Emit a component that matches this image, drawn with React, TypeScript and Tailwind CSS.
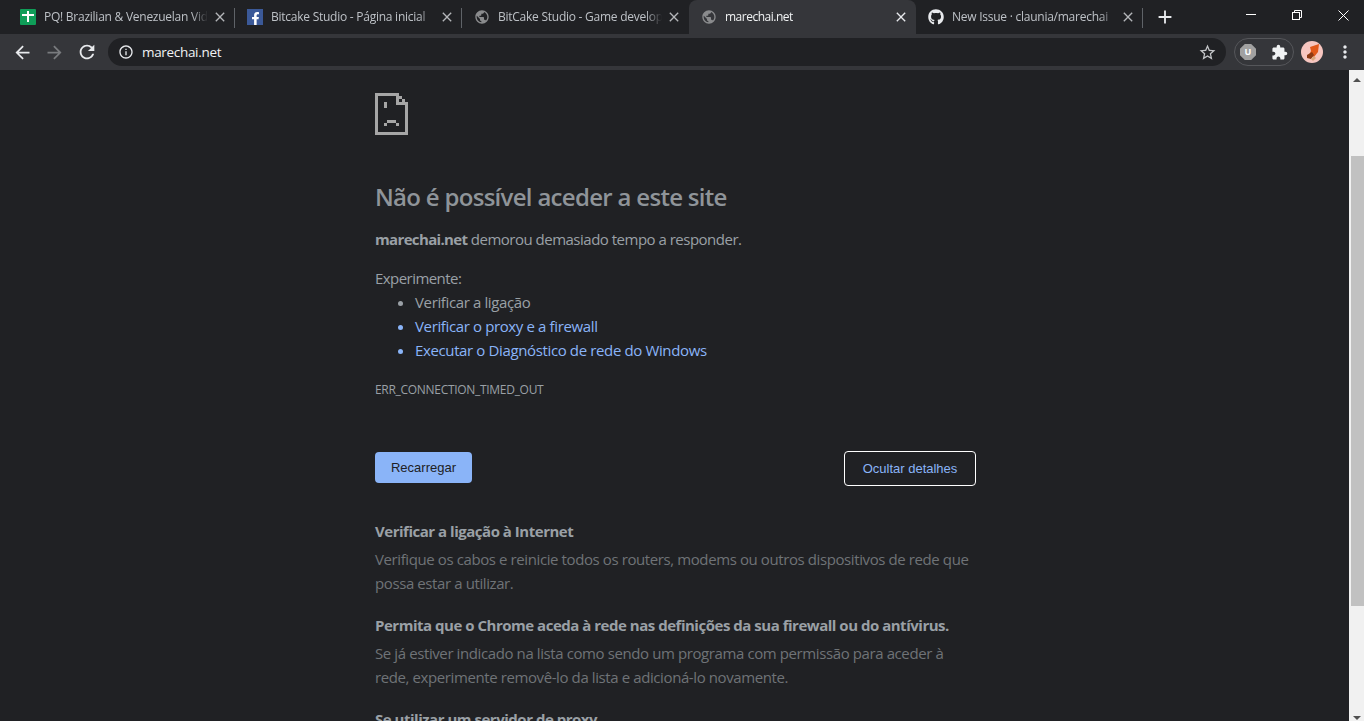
import { MdArrowBack, MdArrowForward, MdRefresh, MdInfoOutline, MdStarBorder, MdExtension, MdMoreVert, MdClose, MdAdd, MdPublic } from 'react-icons/md'
import { FaGithub, FaFacebookF } from 'react-icons/fa'

const segoe = "font-['Open_Sans',sans-serif]"

function Sheets() {
  return (
    <svg width="16" height="16" viewBox="0 0 16 16" className="rounded-[1px]">
      <rect width="16" height="16" fill="#0f9d58" />
      <rect x="2" y="5" width="12" height="2" fill="#fff" />
      <rect x="7" y="2" width="2" height="11" fill="#fff" />
    </svg>
  )
}

function Fb() {
  return (
    <div className="w-4 h-4 bg-[#3b5998] flex items-end justify-end overflow-hidden pr-[1px]">
      <FaFacebookF size={13} color="#fff" />
    </div>
  )
}

const tabs = [
  { title: 'PQ! Brazilian & Venezuelan Video', icon: <Sheets />, sep: true },
  { title: 'Bitcake Studio - Página inicial', icon: <Fb />, sep: true },
  { title: 'BitCake Studio - Game developer', icon: <MdPublic size={18} color="#8a8b8d" />, sep: false },
  { title: 'marechai.net', icon: <MdPublic size={18} color="#8a8b8d" />, active: true, sep: false },
  { title: 'New Issue · claunia/marechai', icon: <FaGithub size={16} color="#e8eaed" />, sep: true },
]

function Tab({ title, icon, active, sep }: { title: string; icon: React.ReactNode; active?: boolean; sep: boolean }) {
  return (
    <div className={`relative w-[227px] h-[34px] pl-3 pr-[7px] flex items-center shrink-0 rounded-t-lg ${active ? 'bg-[#35363a]' : ''}`}>
      <div className="w-4 h-4 shrink-0 flex items-center justify-center">{icon}</div>
      <div className={`ml-2 flex-1 overflow-hidden whitespace-nowrap text-[12px] [mask-image:linear-gradient(to_right,#000_calc(100%-16px),transparent)] ${segoe} ${active ? 'tracking-[-0.5px] text-[#f1f3f4]' : 'tracking-[-0.25px] text-[#bdc1c6]'}`}>
        {title}
      </div>
      <MdClose size={16} className={`ml-1 shrink-0 ${active ? 'text-[#e8eaed]' : 'text-[#b4b6b9]'}`} />
      {sep && <div className="absolute right-0 top-[8px] w-px h-5 bg-[#5f6368]" />}
    </div>
  )
}

function SadFile() {
  return (
    <svg width="33" height="42" viewBox="0 0 33 42" fill="#a6a6a6">
      <rect x="0" y="0" width="3" height="42" />
      <rect x="0" y="39" width="33" height="3" />
      <rect x="30" y="9" width="3" height="33" />
      <rect x="0" y="0" width="24" height="3" />
      <rect x="21" y="0" width="3" height="12" />
      <rect x="21" y="9" width="12" height="3" />
      <rect x="24" y="3" width="3" height="3" />
      <rect x="27" y="6" width="3" height="3" />
      <rect x="9" y="9" width="3" height="6" />
      <rect x="12" y="27" width="9" height="3" />
      <rect x="9" y="30" width="3" height="3" />
      <rect x="21" y="30" width="3" height="3" />
    </svg>
  )
}

function Avatar() {
  return (
    <svg width="22" height="22" viewBox="0 0 22 22">
      <circle cx="11" cy="11" r="11" fill="#f7c6c0" />
      <path d="M9 6l9-3-1 8-4 5-5-2 2-4z" fill="#e2591b" />
      <path d="M6 14l5-3 2 3-3 4-4-1z" fill="#8c3a14" />
      <path d="M10 18l3-3 2 2-3 3z" fill="#d9a77c" />
    </svg>
  )
}

const body = 'text-[15px] leading-[24px] tracking-[-0.4px]'
const heading = 'text-[15px] leading-[24px] font-bold tracking-[-0.48px] text-[#9aa0a6]'

export default function App() {
  return (
    <div className={`w-[1364px] h-[721px] overflow-hidden flex flex-col bg-[#202124] ${segoe}`}>
      {/* barra de pestañas */}
      <div className="h-[34px] shrink-0 flex items-start bg-[#202124]">
        <div className="w-2 shrink-0" />
        {tabs.map(t => (
          <Tab key={t.title} {...t} />
        ))}
        <div className="w-[45px] h-[34px] flex items-center justify-center shrink-0 -ml-px">
          <MdAdd size={22} className="text-[#e8eaed]" />
        </div>
        <div className="flex-1" />
        <div className="flex -mr-[2px]">
          <div className="w-[46px] h-[30px] flex items-center justify-center">
            <svg width="10" height="10" viewBox="0 0 10 10"><rect y="4" width="10" height="1" fill="#fff" /></svg>
          </div>
          <div className="w-[46px] h-[30px] flex items-center justify-center">
            <svg width="10" height="10" viewBox="0 0 10 10" fill="none" stroke="#fff"><rect x="0.5" y="2.5" width="7" height="7" /><path d="M2.5 2.5v-2h7v7h-2" /></svg>
          </div>
          <div className="w-[46px] h-[30px] flex items-center justify-center">
            <svg width="11" height="11" viewBox="0 0 11 11" stroke="#fff"><path d="M0.5 0.5l10 10M10.5 0.5l-10 10" /></svg>
          </div>
        </div>
      </div>

      {/* barra de herramientas */}
      <div className="h-[36px] shrink-0 bg-[#35363a] flex items-center pl-[12px]">
        <MdArrowBack size={21} className="text-[#e8eaed] shrink-0" />
        <MdArrowForward size={21} className="text-[#797b7e] shrink-0 ml-[11px]" />
        <MdRefresh size={22} className="text-[#e8eaed] shrink-0 ml-[11px]" />
        <div className="ml-[10px] w-[1118px] h-7 rounded-full bg-[#202124] flex items-center pl-[10px] pr-[9px] shrink-0">
          <MdInfoOutline size={16} className="text-[#e8eaed]" />
          <span className="ml-[8px] text-[13.5px] tracking-[-0.32px] text-[#f1f3f4] flex-1">marechai.net</span>
          <MdStarBorder size={19} className="text-[#c4c6c9]" />
        </div>
        <div className="ml-[8px] w-[60px] h-7 rounded-full border border-[#55565a] flex items-center pl-[5px] shrink-0">
          <div className="w-4 h-4 bg-[#a1a1a1] [clip-path:polygon(30%_0,70%_0,100%_30%,100%_70%,70%_100%,30%_100%,0_70%,0_30%)] flex items-center justify-center text-[9px] font-bold text-white">U</div>
          <MdExtension size={17} className="text-[#f1f3f4] ml-[15px] shrink-0" />
        </div>
        <div className="ml-[7px] shrink-0"><Avatar /></div>
        <MdMoreVert size={20} className="text-[#e8eaed] shrink-0 ml-[12px]" />
      </div>

      {/* página de error */}
      <div className="flex-1 flex min-h-0">
        <div className="flex-1 overflow-hidden pl-[375px]">
          <div className="w-[601px] pt-[23px]">
            <SadFile />
            <h1 className="mt-[45px] text-[24px] leading-[34px] font-semibold tracking-[-0.7px] text-[#8f9499]">Não é possível aceder a este site</h1>
            <p className="mt-[13px] text-[15px] leading-[24px] tracking-[-0.5px] text-[#9aa0a6]">
              <b className="font-bold tracking-[-0.65px]">marechai.net</b> demorou demasiado tempo a responder.
            </p>
            <p className="mt-[15px] text-[15px] leading-[24px] tracking-[-0.55px] text-[#9aa0a6]">Experimente:</p>
            <ul className="pl-[40px] text-[15px] leading-[24px] tracking-[-0.37px] list-disc text-[#9aa0a6]">
              <li>Verificar a ligação</li>
              <li className="text-[#8ab4f8]">Verificar o proxy e a firewall</li>
              <li className="text-[#8ab4f8]">Executar o Diagnóstico de rede do Windows</li>
            </ul>
            <p className="mt-[19px] text-[12px] leading-[18px] tracking-[-0.3px] text-[#9aa0a6]">ERR_CONNECTION_TIMED_OUT</p>
            <div className="mt-[52px] flex items-start justify-between">
              <button className="mt-px w-[97px] h-[31px] rounded bg-[#8ab4f8] text-[#202124] text-[13px] font-['Liberation_Sans',sans-serif]">Recarregar</button>
              <button className="w-[132px] h-[35px] rounded border border-white bg-[#202124] text-[#8ab4f8] text-[13px] font-['Liberation_Sans',sans-serif]">Ocultar detalhes</button>
            </div>
            <h2 className={`mt-[33px] ${heading}`}>Verificar a ligação à Internet</h2>
            <p className={`mt-[4px] ${body} text-[#6f7377]`}>Verifique os cabos e reinicie todos os routers, modems ou outros dispositivos de rede que possa estar a utilizar.</p>
            <h2 className={`mt-[18px] ${heading}`}>Permita que o Chrome aceda à rede nas definições da sua firewall ou do antívirus.</h2>
            <p className={`mt-[4px] ${body} text-[#6f7377]`}>Se já estiver indicado na lista como sendo um programa com permissão para aceder à rede, experimente removê-lo da lista e adicioná-lo novamente.</p>
            <h2 className={`mt-[18px] ${heading}`}>Se utilizar um servidor de proxy</h2>
          </div>
        </div>

        {/* barra de desplazamiento */}
        <div className="w-[15px] shrink-0 bg-[#f1f1f1] flex flex-col items-center justify-between pb-px">
          <div className="w-full flex flex-col items-center">
            <div className="mt-[8px] w-0 h-0 border-x-[4px] border-x-transparent border-b-[4px] border-b-[#505050]" />
            <div className="mt-[74px] self-end w-[13px] h-[450px] bg-[#c1c1c1]" />
          </div>
          <div className="w-0 h-0 border-x-[4px] border-x-transparent border-t-[4px] border-t-[#505050]" />
        </div>
      </div>
    </div>
  )
}
